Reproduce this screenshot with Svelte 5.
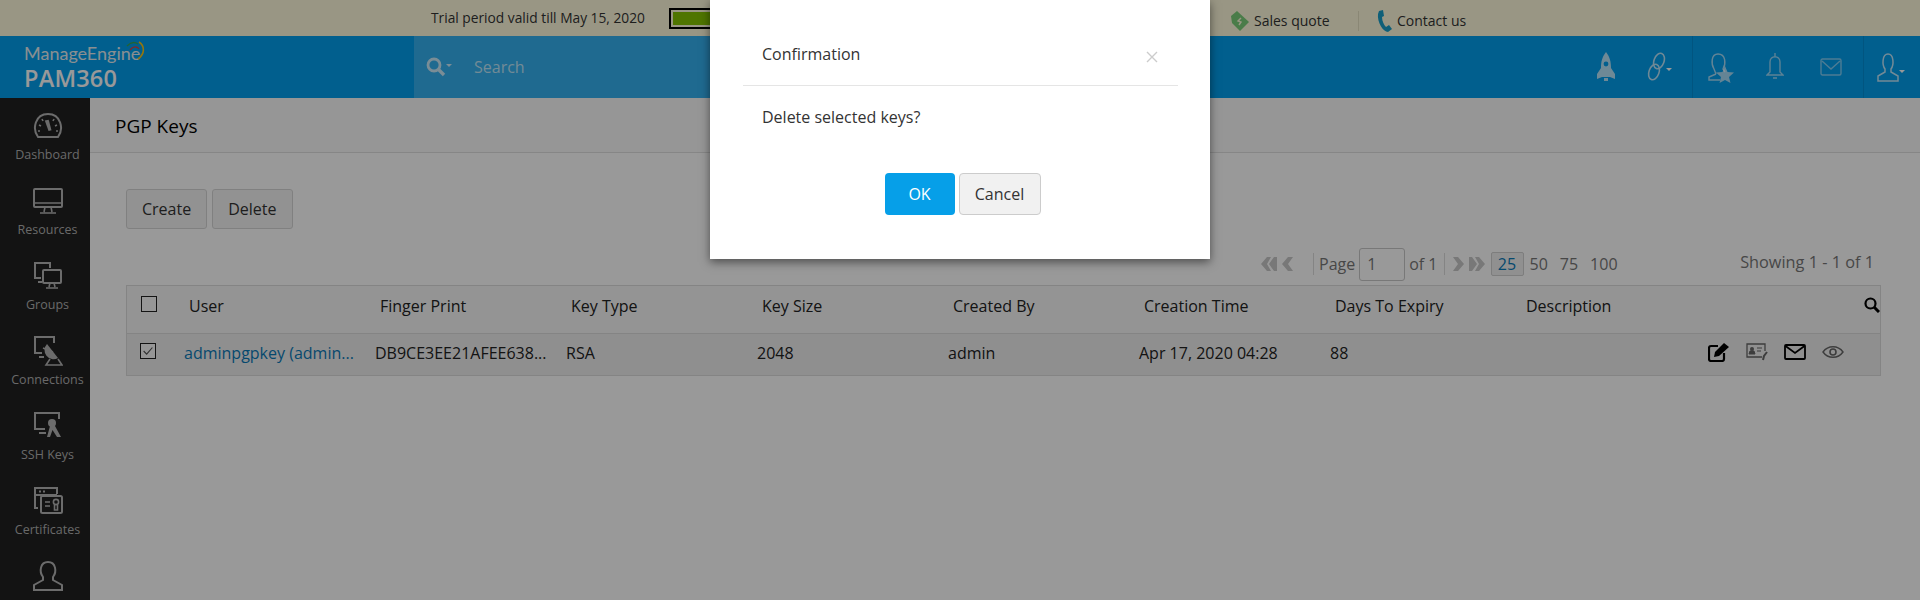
<script lang="ts">
  // Sidebar entries, the last one only shows its icon above the fold
  const navItems = [
    { id: 'dashboard', label: 'Dashboard' },
    { id: 'resources', label: 'Resources' },
    { id: 'groups', label: 'Groups' },
    { id: 'connections', label: 'Connections' },
    { id: 'ssh', label: 'SSH Keys' },
    { id: 'certificates', label: 'Certificates' },
    { id: 'users', label: '' }
  ];

  const columns = ['User', 'Finger Print', 'Key Type', 'Key Size', 'Created By', 'Creation Time', 'Days To Expiry', 'Description'];
  const cells = ['DB9CE3EE21AFEE638...', 'RSA', '2048', 'admin', 'Apr 17, 2020 04:28', '88', ''];
</script>

<div class="page">
  <div class="topbar">
    <span class="trial">Trial period valid till May 15, 2020</span>
    <div class="progress"><div class="progress-fill"></div></div>
    <div class="top-links">
      <svg class="tag" viewBox="0 0 20 20" width="20" height="20">
        <path d="M1 5 L7 0 L19 11 L10 20 L2 12 Z" fill="#7ccf7a" />
        <path d="M11 7 L8 10 L11 11 L9 14" fill="none" stroke="#fffcdc" stroke-width="1.4" />
      </svg>
      <span class="quote">Sales quote</span>
      <span class="top-sep"></span>
      <svg class="phone" viewBox="0 0 15 22" width="15" height="22">
        <path d="M2 1 L6 0 L7 6 L5 7 C5 11 7 15 9 17 L12 15 L15 19 L11 22 C6 22 0 12 1 4 Z" fill="#1a9fc9" />
      </svg>
      <span>Contact us</span>
    </div>
  </div>

  <header class="header">
    <div class="logo">
      <div class="logo-me">ManageEngine</div>
      <div class="logo-pam">PAM360</div>
      <svg class="swoosh" viewBox="0 0 20 20" width="20" height="20">
        <path d="M1 5 C5 1 9 1 12 3" fill="none" stroke="#3aa655" stroke-width="1.4" />
        <path d="M4 9 C7 5 11 5 13 8" fill="none" stroke="#e0403c" stroke-width="1.3" />
        <path d="M13 1 C19 5 19 13 12 18" fill="none" stroke="#f5c518" stroke-width="1.6" />
      </svg>
    </div>
    <div class="search">
      <svg viewBox="0 0 26 20" width="26" height="20" class="search-icon">
        <circle cx="8" cy="8" r="6" fill="none" stroke="#fff" stroke-width="2.8" />
        <path d="M12.5 12.5 L18 18" stroke="#fff" stroke-width="3.4" />
        <path d="M20 7 L26 7 L23 10 Z" fill="#fff" />
      </svg>
      <span>Search</span>
    </div>
    <div class="head-icons">
      <svg viewBox="0 0 18 30" width="18" height="30" class="hi rocket">
        <path d="M9 0 C13 5 14 10 14 16 L18 22 L18 27 L13 25 L5 25 L0 27 L0 22 L4 16 C4 10 5 5 9 0 Z" fill="#fff" opacity="0.72" />
        <circle cx="9" cy="12" r="2.4" fill="#039eed" />
        <rect x="7" y="26" width="4" height="3" fill="#fff" opacity="0.72" />
      </svg>
      <svg viewBox="0 0 28 30" width="28" height="30" class="hi chain">
        <g fill="none" stroke="#fff" stroke-width="1.6" opacity="0.72">
          <ellipse cx="14" cy="9" rx="5" ry="8" transform="rotate(20 14 9)" />
          <ellipse cx="9" cy="20" rx="5" ry="8" transform="rotate(20 9 20)" />
        </g>
        <path d="M21 16 L27 16 L24 19 Z" fill="#fff" />
      </svg>
      <span class="head-sep"></span>
      <svg viewBox="0 0 26 32" width="26" height="32" class="hi ustar">
        <path d="M8 22 L1 25 L1 28 L12 28 M17 20 L15 17 C18 12 18 2 10 2 C3 2 3 12 6 17 L8 22" fill="none" stroke="#fff" stroke-width="1.4" opacity="0.65" />
        <path d="M17 14 L19.5 20 L26 20.5 L21 25 L22.5 31 L17 28 L11.5 31 L13 25 L8 20.5 L14.5 20 Z" fill="#fff" opacity="0.65" />
      </svg>
      <svg viewBox="0 0 18 30" width="18" height="30" class="hi bell">
        <path d="M9 1 L9 4 M4 20 L4 10 C4 3 14 3 14 10 L14 20 L17 23 L1 23 L4 20 Z M7 26 L11 26" fill="none" stroke="#fff" stroke-width="1.4" opacity="0.6" />
      </svg>
      <svg viewBox="0 0 22 18" width="22" height="18" class="hi mail">
        <rect x="1" y="1" width="20" height="16" rx="1.5" fill="none" stroke="#fff" stroke-width="1.4" opacity="0.5" />
        <path d="M2 3 L11 11 L20 3" fill="none" stroke="#fff" stroke-width="1.4" opacity="0.5" />
      </svg>
      <span class="head-sep last"></span>
      <svg viewBox="0 0 28 30" width="28" height="30" class="hi user">
        <path d="M8 20 L1 24 L1 29 L21 29 L21 24 L14 20 L14 17 C17 13 17 2 11 2 C5 2 5 13 8 17 Z" fill="none" stroke="#fff" stroke-width="1.5" opacity="0.75" />
        <path d="M22 18 L28 18 L25 21 Z" fill="#fff" />
      </svg>
    </div>
  </header>

  <div class="body">
    <nav class="sidebar">
      {#each navItems as item}
        <div class="nav-item">
          <svg viewBox="0 0 30 30" width="30" height="30">
            <g fill="none" stroke="#b4b4b4" stroke-width="1.6">
              {#if item.id === 'dashboard'}
                <path d="M5 26 C-1 18 2 3 15 3 C28 3 31 18 25 26 Z" stroke-width="2" />
                <path d="M13 9 L17 9 L17.5 20 L14.5 20 Z" transform="rotate(-12 15 15)" fill="#b4b4b4" stroke="none" />
                <path d="M6 14 L8 15 M24 14 L22 15 M9 8 L10 10 M21 8 L20 10 M5 20 L7 20 M25 20 L23 20" />
              {:else if item.id === 'resources'}
                <rect x="1" y="3" width="28" height="18" rx="1" stroke-width="2" />
                <path d="M1 17 L29 17 M12 21 L11 26 M18 21 L19 26 M7 27 L23 27" />
              {:else if item.id === 'groups'}
                <path d="M8 17 L2 17 L2 2 L17 2 L17 7 M5 21 L9 21" stroke-width="2" />
                <rect x="10" y="9" width="18" height="13" rx="1" stroke-width="2" />
                <path d="M17 22 L16 26 M21 22 L22 26 M13 27 L25 27" />
              {:else if item.id === 'connections'}
                <path d="M9 17 L2 17 L2 1 L21 1 L21 7 M6 21 L11 21" stroke-width="2" />
                <path d="M14 8 A9 9 0 0 0 25 22 Z" fill="#b4b4b4" stroke="none" />
                <path d="M10 12 L20 16 M17 23 L13 29 L29 29 L25 23" />
              {:else if item.id === 'ssh'}
                <path d="M12 18 L2 18 L2 2 L26 2 L26 8 M6 22 L13 22" stroke-width="2" />
                <circle cx="19" cy="12" r="4" fill="#b4b4b4" stroke="none" />
                <path d="M17 15 L14 26 L17 26 L19.5 19 L24 26 L28 26 L22 15 Z" fill="#b4b4b4" stroke="none" />
              {:else if item.id === 'certificates'}
                <path d="M5 22 L2 22 L2 2 L24 2 L24 8 M2 9 L24 9 M6 5.5 L8 5.5 M10 5.5 L12 5.5" stroke-width="2" />
                <rect x="8" y="10" width="21" height="17" rx="1.5" stroke-width="2" />
                <path d="M12 16 L17 16 M12 20 L17 20" />
                <circle cx="23" cy="16" r="2.6" />
                <path d="M21.5 18.5 L21.5 24 L24.5 24 L24.5 18.5" />
              {:else}
                <path d="M10 19 L1 24 L1 29 L29 29 L29 24 L20 19 L20 16 C24 11 23 1 15 1 C7 1 6 11 10 16 Z" stroke-width="2" />
              {/if}
            </g>
          </svg>
          {#if item.label}<span class="nav-label">{item.label}</span>{/if}
        </div>
      {/each}
    </nav>

    <main class="content">
      <div class="title-bar">PGP Keys</div>
      <div class="panel">
        <div class="actions">
          <button class="btn">Create</button>
          <button class="btn">Delete</button>
        </div>

        <div class="pager-row">
          <div class="pager">
            <span class="chev first">
              <svg viewBox="0 0 32 14" width="32" height="14">
                <path d="M6 0 L0 7 L6 14 L10 14 L6 7 L10 0 Z M13 0 L8 7 L13 14 L16 14 L16 0 Z M27 0 L21 7 L27 14 L32 14 L27 7 L32 0 Z" fill="#c8c8c8" />
              </svg>
            </span>
            <span class="pg-sep"></span>
            <span class="pg-text page-word">Page</span>
            <span class="pg-input">1</span>
            <span class="pg-text">of 1</span>
            <span class="pg-sep second"></span>
            <span class="chev next">
              <svg viewBox="0 0 32 14" width="32" height="14">
                <path d="M5 0 L11 7 L5 14 L0 14 L5 7 L0 0 Z M19 0 L24 7 L19 14 L16 14 L16 0 Z M26 0 L32 7 L26 14 L22 14 L26 7 L22 0 Z" fill="#c8c8c8" />
              </svg>
            </span>
            <span class="size active">25</span>
            <span class="size">50</span>
            <span class="size">75</span>
            <span class="size">100</span>
          </div>
          <div class="showing">Showing 1 - 1 of 1</div>
        </div>

        <div class="table">
          <div class="tr head">
            <div class="check-cell"><span class="check"></span></div>
            {#each columns as col}
              <div class="th">{col}</div>
            {/each}
            <svg class="table-search" viewBox="0 0 16 16" width="16" height="16">
              <circle cx="6.5" cy="6.5" r="5" fill="none" stroke="#000" stroke-width="2.2" />
              <path d="M10 10 L15 15" stroke="#000" stroke-width="3" />
            </svg>
          </div>
          <div class="tr row">
            <div class="check-cell row-check">
              <span class="check">
                <svg viewBox="0 0 16 16" width="14" height="14">
                  <path d="M3 8 L6.5 11.5 L13 4" fill="none" stroke="#555" stroke-width="1.3" />
                </svg>
              </span>
            </div>
            <div class="td link">adminpgpkey (admin...</div>
            {#each cells as cell}
              <div class="td">{cell}</div>
            {/each}
            <div class="row-icons">
              <svg viewBox="0 0 22 20" width="22" height="20">
                <path d="M10 4 L3 4 C2 4 1 5 1 6 L1 17 C1 18 2 19 3 19 L14 19 C15 19 16 18 16 17 L16 11" fill="none" stroke="#000" stroke-width="2.2" />
                <path d="M7 10 L16 1 L21 5 L11 14 L6 15 Z" fill="#000" />
              </svg>
              <svg viewBox="0 0 22 18" width="22" height="18">
                <path d="M16 14 L1 14 L1 1 L19 1 L19 8" fill="none" stroke="#666" stroke-width="1.3" />
                <circle cx="6" cy="6" r="2" fill="#666" />
                <path d="M3 11 L9 11 L8 8 L4 8 Z M11 5 L16 5 M11 8 L15 8" fill="#666" stroke="#666" />
                <path d="M21 9 L18 13 L17 17" fill="none" stroke="#666" stroke-width="2" />
              </svg>
              <svg viewBox="0 0 22 16" width="22" height="16">
                <rect x="1" y="1" width="20" height="14" rx="1" fill="none" stroke="#000" stroke-width="1.8" />
                <path d="M1.5 2 L11 9 L20.5 2" fill="none" stroke="#000" stroke-width="1.8" />
              </svg>
              <svg viewBox="0 0 22 14" width="22" height="14">
                <path d="M1 7 C6 0 16 0 21 7 C16 14 6 14 1 7 Z" fill="none" stroke="#666" stroke-width="1.4" />
                <circle cx="11" cy="7" r="3" fill="none" stroke="#666" stroke-width="1.6" />
              </svg>
            </div>
          </div>
        </div>
      </div>
    </main>
  </div>

  <!-- Dimmed backdrop and the confirmation dialog -->
  <div class="backdrop"></div>
  <div class="modal">
    <div class="modal-head">
      <span>Confirmation</span>
      <svg class="close" viewBox="0 0 12 12" width="12" height="12">
        <path d="M1 1 L11 11 M11 1 L1 11" stroke="#ccc" stroke-width="1.4" />
      </svg>
    </div>
    <div class="modal-text">Delete selected keys?</div>
    <div class="modal-btns">
      <button class="ok">OK</button>
      <button class="cancel">Cancel</button>
    </div>
  </div>
</div>

<style>
  :global(body) {
    margin: 0;
  }

  .page {
    position: relative;
    width: 1920px;
    height: 600px;
    overflow: hidden;
    background: #fff;
    font-family: "Open Sans", "Liberation Sans", sans-serif;
    font-size: 16px;
    color: #333;
  }

  /* Trial strip */
  .topbar {
    height: 36px;
    background: #fffbdd;
    display: flex;
    align-items: center;
    padding-left: 431px;
    color: #333;
    font-size: 14px;
  }

  .trial {
    width: 238px;
    font-size: 13.75px;
    margin-top: -2px;
  }

  .progress {
    width: 200px;
    height: 21px;
    box-sizing: border-box;
    border: 2px solid #000;
    padding: 2px;
  }

  .progress-fill {
    height: 100%;
    width: 70%;
    background: #84c300;
  }

  .top-links {
    margin-left: 361px;
    margin-top: 5px;
    display: flex;
    align-items: center;
  }

  .tag {
    margin-right: 4px;
  }

  .quote {
    width: 104px;
  }

  .top-sep {
    width: 1px;
    height: 20px;
    background: #e6e2c4;
    margin-right: 18px;
  }

  .phone {
    margin-right: 5px;
  }

  /* Main header */
  .header {
    height: 62px;
    background: #039eed;
    display: flex;
    align-items: stretch;
    color: #fff;
  }

  .logo {
    position: relative;
    width: 414px;
    box-sizing: border-box;
    padding: 7px 0 0 24px;
  }

  .logo-me {
    font-family: Lato, "Open Sans", sans-serif;
    font-size: 18px;
    line-height: 20px;
    color: #e6eef2;
  }

  .logo-pam {
    font-size: 23.5px;
    font-weight: 600;
    line-height: 30px;
    letter-spacing: 0.2px;
  }

  .swoosh {
    position: absolute;
    left: 126px;
    top: 5px;
  }

  .search {
    width: 796px;
    background: #35b1f0;
    display: flex;
    align-items: center;
    padding-left: 12px;
    box-sizing: border-box;
    color: #bfe6fa;
    font-size: 16px;
  }

  .search-icon {
    margin-right: 22px;
    opacity: 0.75;
  }

  .head-icons {
    flex: 1;
    display: flex;
    align-items: center;
    position: relative;
    height: 62px;
  }

  .hi {
    position: absolute;
  }

  .rocket { left: 387px; top: 16px; }
  .chain { left: 435px; top: 16px; }
  .ustar { left: 498px; top: 16px; }
  .bell { left: 556px; top: 16px; }
  .mail { left: 610px; top: 22px; }
  .user { left: 667px; top: 16px; }

  .head-sep {
    position: absolute;
    left: 482px;
    top: 0;
    width: 1px;
    height: 62px;
    background: #038ed6;
  }

  .head-sep.last {
    left: 653px;
  }

  /* Below the header */
  .body {
    display: flex;
    height: 502px;
  }

  .sidebar {
    width: 90px;
    background: #202020;
    flex-shrink: 0;
    padding: 13px 0 0 5px;
    box-sizing: border-box;
    overflow: hidden;
  }

  .nav-item {
    height: 75px;
    display: flex;
    flex-direction: column;
    align-items: center;
  }

  .nav-label {
    font-size: 12.5px;
    line-height: 18px;
    margin-top: 5px;
    color: #b0b0b0;
    white-space: nowrap;
  }

  .content {
    flex: 1;
  }

  .title-bar {
    height: 55px;
    box-sizing: border-box;
    border-bottom: 1px solid #e0e0e0;
    background: #fbfbfb;
    padding: 15px 0 0 25px;
    font-size: 19px;
    line-height: 26px;
    color: #000;
  }

  .panel {
    padding: 36px 39px 0 36px;
  }

  .actions {
    display: flex;
    gap: 5px;
  }

  .btn {
    height: 40px;
    padding: 0 15px;
    font: inherit;
    color: #333;
    background: #f4f4f4;
    border: 1px solid #d6d6d6;
    border-radius: 3px;
  }

  .pager-row {
    display: flex;
    align-items: center;
    height: 42px;
    margin-top: 14px;
    padding-right: 7px;
    color: #777;
  }

  .pager {
    margin-left: 1135px;
    display: flex;
    align-items: center;
  }

  .chev {
    display: flex;
  }

  .chev.first {
    width: 52px;
  }

  .chev.next {
    width: 38px;
  }

  .pg-sep {
    width: 1px;
    height: 22px;
    background: #ddd;
    margin-right: 5px;
  }

  .pg-sep.second {
    margin: 0 8px 0 2px;
  }

  .pg-text {
    margin-right: 4px;
  }

  .pg-input {
    width: 46px;
    height: 33px;
    box-sizing: border-box;
    border: 1px solid #c8c8c8;
    border-radius: 3px;
    padding: 5px 0 0 7px;
    line-height: 20px;
    margin-right: 4px;
  }

  .size {
    margin-right: 12px;
  }

  .size.active {
    color: #0a7ab8;
    background: #f1f1f1;
    border: 1px solid #d0d0d0;
    border-radius: 2px;
    height: 24px;
    line-height: 23px;
    width: 33px;
    box-sizing: border-box;
    text-align: center;
    margin-right: 6px;
  }

  .showing {
    white-space: nowrap;
    font-size: 16.3px;
    margin: -4px 0 0 auto;
  }

  .table {
    border: 1px solid #dcdcdc;
    width: 1755px;
    box-sizing: border-box;
  }

  .tr {
    display: grid;
    grid-template-columns: 57px repeat(8, 191px) 1fr;
    position: relative;
  }

  .head {
    height: 48px;
    background: #f7f7f7;
    border-bottom: 1px solid #dcdcdc;
    box-sizing: border-box;
    color: #222;
  }

  .row {
    height: 41px;
    background: #efefef;
    color: #222;
  }

  .th {
    padding: 10px 0 0 5px;
    line-height: 20px;
  }

  .td {
    padding-top: 9px;
    line-height: 20px;
    white-space: nowrap;
  }

  .link {
    color: #0a7ab8;
  }

  .check-cell {
    padding: 10px 0 0 14px;
  }

  .row-check {
    padding: 9px 0 0 13px;
  }

  .check {
    display: block;
    width: 16px;
    height: 16px;
    box-sizing: border-box;
    border: 1px solid #222;
    background: #fbfbfb;
  }

  .check svg {
    display: block;
  }

  .table-search {
    position: absolute;
    right: 0;
    top: 11px;
  }

  .row-icons {
    position: absolute;
    left: 1581px;
    top: 8px;
    display: flex;
    align-items: center;
    gap: 16px;
  }

  /* Overlay layer */
  .backdrop {
    position: absolute;
    inset: 0;
    background: rgba(0, 0, 0, 0.4);
  }

  .modal {
    position: absolute;
    left: 710px;
    top: 0;
    width: 500px;
    height: 259px;
    box-sizing: border-box;
    background: #fff;
    box-shadow: 0 3px 9px rgba(0, 0, 0, 0.5);
    padding: 0 32px 0 33px;
  }

  .modal-head {
    height: 86px;
    box-sizing: border-box;
    border-bottom: 1px solid #e5e5e5;
    padding: 42px 0 0 19px;
    line-height: 24px;
    position: relative;
  }

  .close {
    position: absolute;
    right: 20px;
    top: 51px;
  }

  .modal-text {
    padding: 19px 0 0 19px;
    line-height: 24px;
  }

  .modal-btns {
    display: flex;
    justify-content: center;
    gap: 4px;
    margin-top: 44px;
    padding-left: 4px;
  }

  .ok,
  .cancel {
    height: 42px;
    font: inherit;
    border-radius: 4px;
  }

  .ok {
    width: 70px;
    color: #fff;
    background: #069fe8;
    border: none;
  }

  .cancel {
    width: 82px;
    color: #333;
    background: #f1f1f1;
    border: 1px solid #ccc;
  }
</style>
